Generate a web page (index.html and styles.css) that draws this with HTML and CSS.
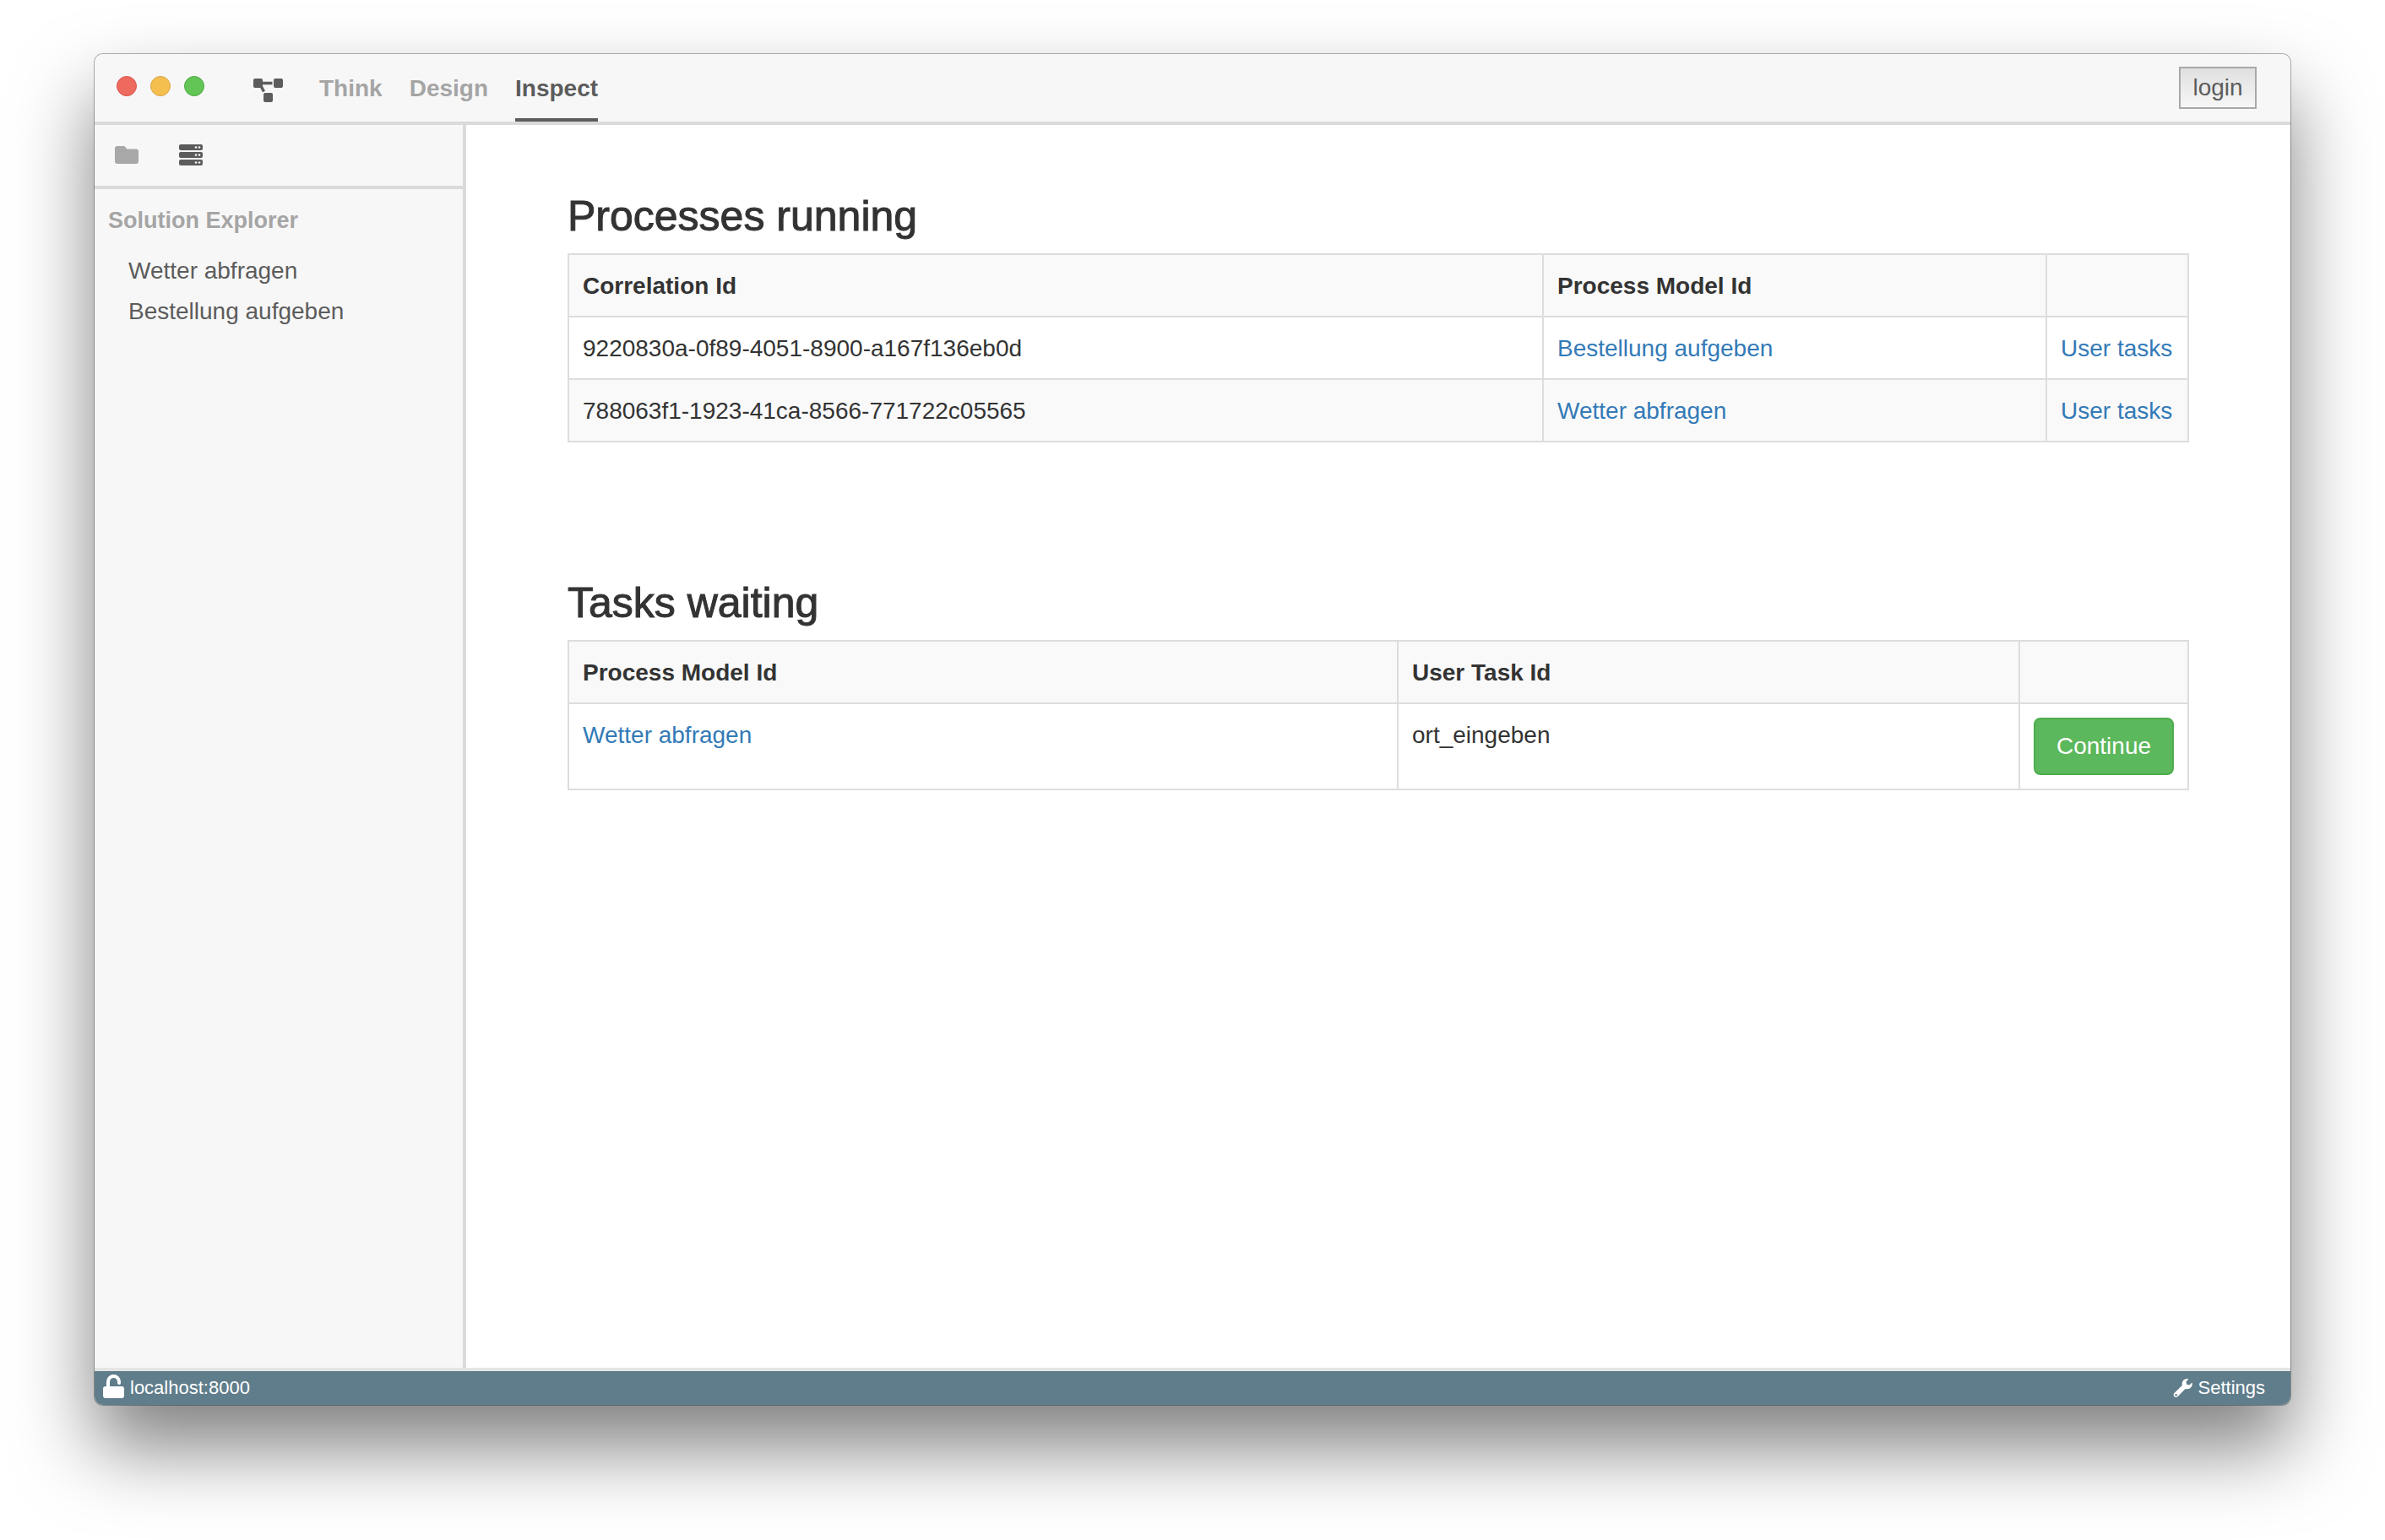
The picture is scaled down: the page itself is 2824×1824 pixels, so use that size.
FILE: index.html
```html
<!DOCTYPE html>
<html lang="en">
<head>
<meta charset="utf-8">
<title>Inspect</title>
<link rel="stylesheet" href="styles.css">
</head>
<body>
<div class="window">
  <header class="titlebar">
    <div class="lights"><span class="light close"></span><span class="light minimize"></span><span class="light maximize"></span></div>
    <svg class="logo" width="36" height="30" viewBox="0 0 36 30" aria-hidden="true">
      <path d="M6 6.500H22.500M7 6L12.500 16.500" fill="none" stroke="#5c5c5c" stroke-width="3.500"/>
      <rect x="0" y="1" width="11" height="11" rx="2"/><rect x="24" y="1" width="11" height="11" rx="2"/><rect x="12" y="18" width="11" height="11" rx="2"/>
    </svg>
    <nav class="tabs">
      <a href="#think">Think</a>
      <a href="#design">Design</a>
      <a href="#inspect" class="active">Inspect</a>
    </nav>
    <button class="login" type="button">login</button>
  </header>
  <div class="workspace">
    <aside class="sidebar">
      <div class="sources">
        <button type="button" aria-label="Files"><svg width="28" height="26" viewBox="0 0 28 26"><path fill="#a8a8a8" d="M3 2H10Q11.500 2 12.500 3L14 5.500H25Q28 5.500 28 8.500V20Q28 23 25 23H3Q0 23 0 20V5Q0 2 3 2Z"/></svg></button>
        <button type="button" aria-label="Server"><svg width="28" height="26" viewBox="0 0 28 26"><g fill="#5c5c5c"><rect y="0" width="28" height="7" rx="2"/><rect y="9" width="28" height="7" rx="2"/><rect y="18" width="28" height="7" rx="2"/></g><g fill="#f7f7f7"><circle cx="20" cy="3.500" r="1.300"/><circle cx="24" cy="3.500" r="1.300"/><circle cx="20" cy="12.500" r="1.300"/><circle cx="24" cy="12.500" r="1.300"/><circle cx="20" cy="21.500" r="1.300"/><circle cx="24" cy="21.500" r="1.300"/></g></svg></button>
      </div>
      <div class="explorer">
        <h1>Solution Explorer</h1>
        <ul>
          <li><a href="#wetter">Wetter abfragen</a></li>
          <li><a href="#bestellung">Bestellung aufgeben</a></li>
        </ul>
      </div>
    </aside>
    <main class="content">
      <section>
        <h2>Processes running</h2>
        <table>
          <colgroup><col><col class="model"><col class="links"></colgroup>
          <thead><tr><th>Correlation Id</th><th>Process Model Id</th><th></th></tr></thead>
          <tbody>
            <tr><td>9220830a-0f89-4051-8900-a167f136eb0d</td><td><a href="#bestellung">Bestellung aufgeben</a></td><td><a href="#tasks">User tasks</a></td></tr>
            <tr class="shaded"><td>788063f1-1923-41ca-8566-771722c05565</td><td><a href="#wetter">Wetter abfragen</a></td><td><a href="#tasks">User tasks</a></td></tr>
          </tbody>
        </table>
      </section>
      <section>
        <h2>Tasks waiting</h2>
        <table>
          <colgroup><col><col class="task"><col class="actions"></colgroup>
          <thead><tr><th>Process Model Id</th><th>User Task Id</th><th></th></tr></thead>
          <tbody>
            <tr><td><a href="#wetter">Wetter abfragen</a></td><td>ort_eingeben</td><td><button class="continue" type="button">Continue</button></td></tr>
          </tbody>
        </table>
      </section>
    </main>
  </div>
  <footer class="statusbar">
    <a href="#host"><svg width="26" height="32" viewBox="0 0 26 32" aria-hidden="true"><rect x="0" y="14" width="25" height="14" rx="3"/><path d="M6 16V8.500A6.500 6.500 0 0 1 19 8.500V10" fill="none" stroke="#fff" stroke-width="4" stroke-linecap="round"/></svg>localhost:8000</a>
    <a href="#settings"><svg width="24" height="24" viewBox="0 0 24 24" aria-hidden="true"><path fill-rule="evenodd" d="M18.500 1.200L15.500 4.500L16.200 7.800L19.300 8.500L22.600 5.400Q23.500 9.500 20.500 12Q17.500 14 14.500 13L6 21.800Q3.500 24 1.400 22Q-.500 19.800 2 17.400L11 8.700Q10 5.500 12.300 2.800Q15 .300 18.500 1.200ZM3.600 18.900A1.300 1.300 0 1 0 3.600 21.500A1.300 1.300 0 1 0 3.600 18.900Z"/></svg>Settings</a>
  </footer>
</div>
</body>
</html>
```
FILE: styles.css
```css
* { box-sizing: border-box; }
body {
  margin: 0;
  min-height: 100vh;
  padding: 64px 112px 160px;
  display: flex;
  background: #fff;
  color: #333;
  font: 28px/40px "Liberation Sans", Arial, sans-serif;
}
a { color: #337ab7; text-decoration: none; }
button { font: inherit; cursor: pointer; }
h1, h2, ul { margin: 0; padding: 0; }

.window {
  flex: 1;
  display: flex;
  flex-direction: column;
  overflow: hidden;
  border-radius: 10px;
  background: #fff;
  box-shadow: 0 0 0 1px rgba(0, 0, 0, .3), 0 50px 92px rgba(0, 0, 0, .5);
}

.titlebar {
  display: flex;
  align-items: center;
  height: 84px;
  padding: 0 40px 0 26px;
  border-bottom: 4px solid #dadada;
  background: #f7f7f7;
}
.lights { display: flex; gap: 16px; padding-bottom: 4px; }
.light { width: 24px; height: 24px; border: 1px solid #d9554b; border-radius: 50%; background: #ee6a5f; }
.minimize { border-color: #dba445; background: #f5bf4f; }
.maximize { border-color: #50a845; background: #62c555; }
.logo { margin: 6px 42px 0 58px; fill: #5c5c5c; }
.tabs { display: flex; gap: 32px; align-self: stretch; }
.tabs a { padding-top: 21px; border-bottom: 4px solid transparent; color: #a5a5a5; font-weight: bold; }
.tabs .active { border-color: #5c5c5c; color: #5c5c5c; }
.login {
  margin-left: auto;
  width: 92px;
  height: 50px;
  padding: 0;
  border: 2px solid #a9a9a9;
  background: linear-gradient(#e0e0e0, #f7f7f7);
  color: #5c5c5c;
}

.workspace { flex: 1; display: flex; }
.sidebar { flex: 0 0 440px; border-right: 4px solid #dadada; background: #f7f7f7; }
.sources {
  display: flex;
  align-items: center;
  gap: 48px;
  height: 76px;
  padding-left: 24px;
  border-bottom: 4px solid #dadada;
}
.sources button { display: flex; padding: 0; border: 0; background: none; }
.explorer { padding: 17px 16px; }
.explorer h1 { color: #a5a5a5; font-size: 27px; line-height: 40px; }
.explorer ul { margin-top: 16px; padding-left: 24px; list-style: none; line-height: 48px; }
.explorer a { color: #5c5c5c; }

.content { flex: 1; display: flex; flex-direction: column; gap: 162px; padding: 80px 120px; }
h2 { margin-bottom: 16px; font-size: 50px; font-weight: 500; line-height: 56px; -webkit-text-stroke: 1px #333; }
table {
  width: 100%;
  table-layout: fixed;
  border: solid #ddd;
  border-width: 0 2px 2px 0;
  border-spacing: 0;
}
.model { width: 596px; }
.links { width: 168px; }
.task { width: 736px; }
.actions { width: 200px; }
th, td { padding: 17px 16px 15px; border: solid #ddd; border-width: 2px 0 0 2px; text-align: left; vertical-align: top; white-space: nowrap; }
th, .shaded { background: #f9f9f9; }
td:has(button) { padding: 16px; }
.continue {
  display: block;
  width: 100%;
  height: 68px;
  border: 2px solid #4cae4c;
  border-radius: 8px;
  background: #5cb85c;
  color: #fff;
}

.statusbar {
  display: flex;
  justify-content: space-between;
  padding: 0 30px 0 10px;
  border-top: 4px solid #e5e5e5;
  background: #607d8b;
  font-size: 22px;
}
.statusbar a { display: flex; align-items: center; gap: 6px; color: #fff; }
.statusbar svg { fill: #fff; }
```
